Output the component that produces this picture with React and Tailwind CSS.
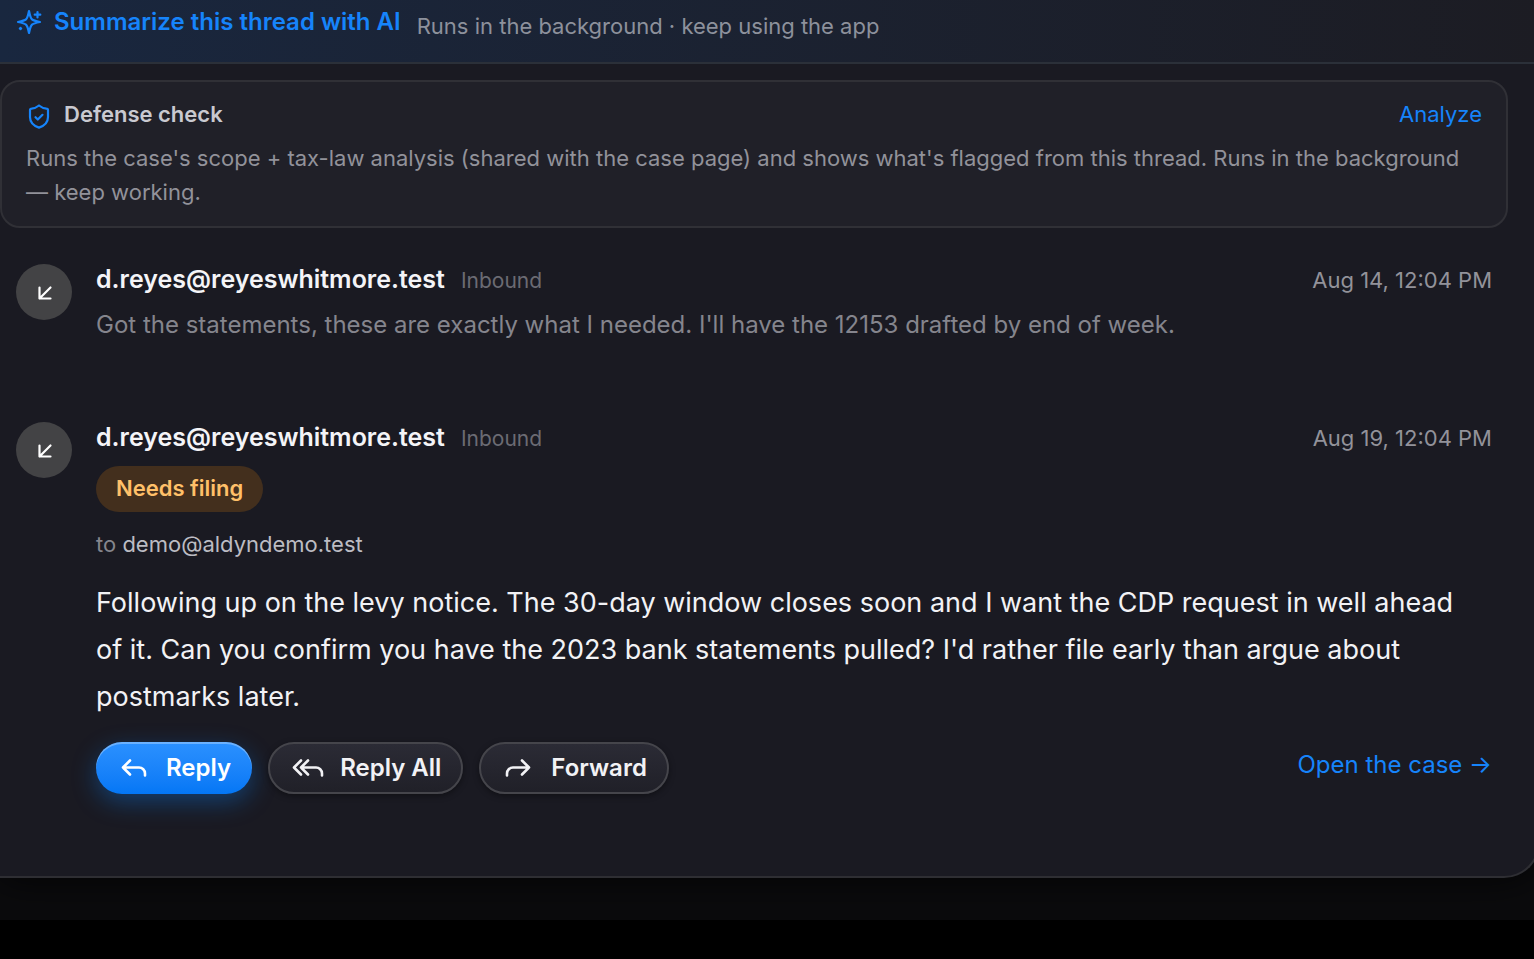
const ICONS = {
  sparkles: (
    <>
      <path d="M13 2c1.100 5.500 1.700 7.300 3 8.400 1.200 1.100 3 1.600 8 2.600-5 1-6.800 1.500-8 2.600-1.300 1.100-1.900 2.900-3 8.400-1.100-5.500-1.700-7.300-3-8.400C8.800 14.500 7 14 2 13c5-1 6.800-1.500 8-2.600 1.300-1.100 1.900-2.900 3-8.400z" />
      <path d="M21.500 3v5.500M18.700 5.700h5.600M4.500 18.800v1.400M3.800 19.500h1.400" />
    </>
  ),
  shield: (
    <>
      <path d="M13 1.500c2.200 1.800 4.800 2.900 7.500 3.100a1.500 1.500 0 0 1 1.500 1.500V13c0 5.300-3.500 8.800-9 10.600C7.500 21.800 4 18.300 4 13V6.100a1.500 1.500 0 0 1 1.500-1.500C8.200 4.400 10.800 3.300 13 1.500z" />
      <path d="M9.500 13.200l2.300 2.300 4.700-4.700" />
    </>
  ),
  inbound: <path d="M20.500 9.500l-11 11M9.500 9.500v11h11" />,
  reply: <path d="M10 5.500l-7 7 7 7M3 12.500h16a6 6 0 0 1 6 6v2" />,
  forward: <path d="M17 5.500l7 7-7 7M24 12.500H8a6 6 0 0 0-6 6v2" />,
  replyAll: <path d="M9 5.500l-7 7 7 7M16 5.500l-7 7 7 7M9 12.500h15a6 6 0 0 1 6 6v2" />,
};

function Icon({ name, className, viewBox = '0 0 26 26', strokeWidth = 2.2 }) {
  return (
    <svg
      viewBox={viewBox}
      className={`shrink-0 overflow-visible ${className}`}
      fill="none"
      stroke="currentColor"
      strokeWidth={strokeWidth}
      strokeLinecap="round"
      strokeLinejoin="round"
      aria-hidden="true"
    >
      {ICONS[name]}
    </svg>
  );
}

const messages = [
  {
    id: 1,
    from: 'd.reyes@reyeswhitmore.test',
    date: 'Aug 14, 12:04 PM',
    preview: "Got the statements, these are exactly what I needed. I'll have the 12153 drafted by end of week.",
  },
  {
    id: 2,
    from: 'd.reyes@reyeswhitmore.test',
    date: 'Aug 19, 12:04 PM',
    tag: 'Needs filing',
    to: 'demo@aldyndemo.test',
    body: "Following up on the levy notice. The 30-day window closes soon and I want the CDP request in well ahead of it. Can you confirm you have the 2023 bank statements pulled? I'd rather file early than argue about postmarks later.",
  },
];

export default function App() {
  return (
    <div className="min-h-screen overflow-hidden bg-black font-[Inter,sans-serif]">
      <div className="overflow-hidden bg-[#0b0b0d] pb-[42px]">
        <main className="-mr-1.5 rounded-br-[36px] border-r-2 border-b-2 border-[#2e2e33] bg-[#1a1a22] pb-[82px] shadow-[0_0_40px_rgba(0,0,0,0.8)]">
          <SummaryBar />
          <DefenseCheck />
          <div className="space-y-[74px] pt-8 pr-[46px] pl-4">
            {messages.map((m) => <Message key={m.id} message={m} />)}
          </div>
        </main>
      </div>
    </div>
  );
}

function SummaryBar() {
  return (
    <div className="flex items-start gap-4 border-b-2 border-[#2b3039] bg-linear-to-r from-[#19273f] to-[#1c1c23] px-4 pt-[5px] pb-[19px]">
      <button type="button" className="flex items-center gap-3 text-[24px] leading-[34px] font-semibold text-[#1684fb]">
        <Icon name="sparkles" className="size-[26px]" />
        Summarize this thread with AI
      </button>
      <span className="pt-1 text-[22px] leading-[34px] text-[#8d919c]">Runs in the background · keep using the app</span>
    </div>
  );
}

function DefenseCheck() {
  return (
    <section className="mt-4 mr-[30px] rounded-[20px] border-2 border-[#303036] bg-[#202028] px-6 pt-4 pb-[17px]">
      <div className="flex items-center">
        <Icon name="shield" className="mt-1.5 mr-3 size-[26px] text-[#1684fb]" />
        <h2 className="text-[22px] leading-8 font-semibold text-[#c9c9d0]">Defense check</h2>
        <button type="button" className="ml-auto text-[22px] leading-8 text-[#1684fb]">Analyze</button>
      </div>
      <p className="mt-[11px] text-[22px] leading-[34px] text-[#92929a]">
        Runs the case's scope + tax-law analysis (shared with the case page) and shows what's flagged from this thread. Runs in the background — keep working.
      </p>
    </section>
  );
}

function Message({ message }) {
  const { from, date, preview, tag, to, body } = message;
  return (
    <article className="flex gap-6">
      <div className="mt-1 flex size-14 shrink-0 items-center justify-center rounded-full bg-[#434345] text-white">
        <Icon name="inbound" className="size-7" viewBox="0 0 28 28" />
      </div>
      <div className="min-w-0 flex-1">
        <header className="flex items-baseline gap-4">
          <h3 className="text-[25px] leading-[38px] font-semibold text-[#f4f4f7]">{from}</h3>
          <span className="text-[21px] text-[#6b6b73]">Inbound</span>
          <time className="ml-auto text-[22px] text-[#92929a]">{date}</time>
        </header>
        {preview && <p className="mt-2 text-[24px] leading-[38px] text-[#85858d]">{preview}</p>}
        {tag && (
          <div className="mt-[10px] flex">
            <span className="rounded-full bg-[#432f1d] px-5 pt-[5px] pb-[7px] text-[22px] leading-[34px] font-semibold text-[#ffc069]">{tag}</span>
          </div>
        )}
        {to && (
          <p className="mt-[15px] text-[22px] leading-[34px] text-[#85858d]">
            to <span className="text-[#bcbcc3]">{to}</span>
          </p>
        )}
        {body && (
          <>
            <p className="mt-[18px] pr-4 text-[27px] leading-[47px] text-[#f2f2f5]">{body}</p>
            <MessageActions />
          </>
        )}
      </div>
    </article>
  );
}

function MessageActions() {
  const pill = 'flex h-[52px] items-center rounded-full text-[24px] font-semibold';
  const dark = 'border-2 border-[#45454b] bg-linear-to-b from-[#2b2b35] to-[#202028] pr-5 text-[#f2f2f5] shadow-[0_2px_6px_rgba(0,0,0,0.4)]';
  return (
    <div className="mt-[22px] flex items-start gap-4">
      <button type="button" className={`${pill} gap-5 bg-linear-to-b from-[#2b91ff] to-[#0477f5] pr-[21px] pl-6 text-white shadow-[inset_0_2px_0_rgba(255,255,255,0.3),0_8px_24px_rgba(10,132,255,0.35)]`}>
        <Icon name="reply" className="size-[26px]" strokeWidth={2.6} />
        Reply
      </button>
      <button type="button" className={`${pill} ${dark} gap-4 pl-[22px]`}>
        <Icon name="replyAll" className="h-[26px] w-8" viewBox="0 0 32 26" strokeWidth={2.6} />
        Reply All
      </button>
      <button type="button" className={`${pill} ${dark} gap-5 pl-6`}>
        <Icon name="forward" className="size-[26px]" strokeWidth={2.6} />
        Forward
      </button>
      <a href="#case" className="ml-auto text-[24px] leading-[46px] text-[#1684fb]">Open the case →</a>
    </div>
  );
}
